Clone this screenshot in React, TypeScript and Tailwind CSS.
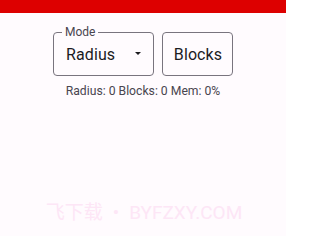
import React from "react";

export default function App() {
  return (
    <div className="w-[286px] h-[236px] bg-[#fffbfe] flex flex-col overflow-hidden" style={{ fontFamily: "Roboto, 'Noto Sans CJK SC', sans-serif" }}>
      <div className="h-[13px] bg-[#dd0000] shrink-0" />
      <div className="flex flex-row justify-center gap-2 mt-[19px]">
        <div className="relative w-[101px] h-[44px] border border-[#79747e] rounded-[4px] flex items-center pl-[12px] pr-[10px]">
          <span className="absolute -top-[8px] left-[8px] px-[3px] bg-[#fffbfe] text-[12px] leading-[14px] text-[#49454f]">Mode</span>
          <span className="text-[16px] text-[#1c1b1f] flex-1 pt-[1px] tracking-[0.1px]">Radius</span>
          <svg width="10" height="5" viewBox="0 0 10 5" className="mt-[1px]">
            <path d="M2 0 L8 0 L5 3 Z" fill="#1c1b1f" />
          </svg>
        </div>
        <div className="w-[71px] h-[44px] border border-[#79747e] rounded-[4px] flex items-center justify-center">
          <span className="text-[16px] text-[#1c1b1f] pt-[1px] pl-[1px] tracking-[0.1px]">Blocks</span>
        </div>
      </div>
      <div className="text-center text-[12.2px] text-[#49454f] mt-[7px] leading-[16px]">Radius: 0 Blocks: 0 Mem: 0%</div>
      <div className="flex-1" />
      <div className="flex justify-center items-baseline text-[19px] leading-[20px] text-[#fde6f6] mb-[13px] pl-[2px]">
        <span className="tracking-[0px]">飞下载</span>
        <span className="mx-[10px]">•</span>
        <span>BYFZXY.COM</span>
      </div>
    </div>
  );
}
